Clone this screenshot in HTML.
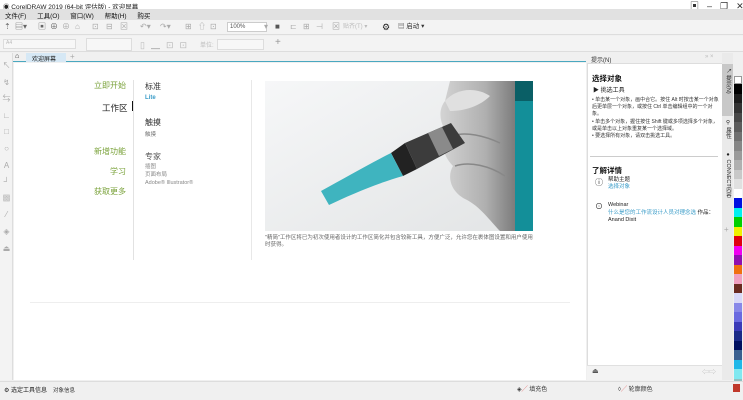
<!DOCTYPE html>
<html><head><meta charset="utf-8"><style>
*{margin:0;padding:0;box-sizing:border-box}
body{width:743px;height:400px;overflow:hidden;background:#f0f0f0;font-family:"Liberation Sans","Noto Sans CJK SC",sans-serif;font-size:7px;color:#333;position:relative}
.a{position:absolute}
.t{white-space:nowrap}
.i{position:absolute;top:22px;font-size:8px;color:#666;white-space:nowrap;line-height:10px}
</style></head><body>
<!-- title -->
<div class="a" style="left:0;top:0;width:743px;height:10px;background:#fff"></div>
<div class="a t" style="left:3px;top:1px;font-size:6.5px;color:#222">◉ CorelDRAW 2019 (64-bit 评估版) - 欢迎屏幕</div>
<div class="a t" style="left:690px;top:-1px;font-size:9px;color:#333;letter-spacing:8px">▣–❐✕</div>
<!-- menu -->
<div class="a" style="left:0;top:9px;width:743px;height:11px;background:#e1e1e1"></div>
<div class="a t" style="left:5px;top:10px;font-size:6.5px;color:#111;word-spacing:9px">文件(F) 工具(O) 窗口(W) 帮助(H) 购买</div>
<!-- toolbar1 -->
<div class="a" style="left:0;top:20px;width:743px;height:15px;background:#f3f3f3;border-bottom:1px solid #ddd"></div>
<div class="i" style="left:4px">⇡</div>
<div class="i" style="left:15px">▤▾</div>
<div class="i" style="left:38px">▣</div>
<div class="i" style="left:50px">⊕</div>
<div class="i" style="left:62px;color:#aaa">⊕</div>
<div class="i" style="left:75px;color:#aaa">⌂</div>
<div class="i" style="left:92px;color:#aaa">⊡</div>
<div class="i" style="left:106px;color:#aaa">⊟</div>
<div class="i" style="left:120px;color:#aaa">⊠</div>
<div class="i" style="left:140px;color:#aaa">↶▾</div>
<div class="i" style="left:160px;color:#aaa">↷▾</div>
<div class="i" style="left:185px;color:#aaa">⊞</div>
<div class="i" style="left:198px;color:#aaa">⇧</div>
<div class="i" style="left:210px;color:#aaa">⊡</div>
<div class="a" style="left:227px;top:22px;width:40px;height:10px;background:#fff;border:1px solid #ccc;font-size:6px;padding-left:2px;color:#555;line-height:8px">100%</div>
<div class="i" style="left:264px;color:#aaa">▾</div>
<div class="i" style="left:275px;color:#555">■</div>
<div class="i" style="left:290px;color:#aaa">⊏</div>
<div class="i" style="left:303px;color:#aaa">⊞</div>
<div class="i" style="left:316px;color:#aaa">⊣</div>
<div class="i" style="left:332px;color:#aaa">⊠</div>
<div class="i" style="left:343px;color:#bbb;font-size:6px">贴齐(T) ▾</div>
<div class="i" style="left:382px;color:#222;font-size:9px">⚙</div>
<div class="i" style="left:398px;color:#333;font-size:6.5px">▤ 启动 ▾</div>
<!-- toolbar2 -->
<div class="a" style="left:0;top:36px;width:743px;height:16px;background:#f3f3f3;border-bottom:1px solid #ddd"></div>
<div class="a" style="left:3px;top:39px;width:73px;height:10px;border:1px solid #ddd;background:#f7f7f7;font-size:5px;color:#bbb;padding-left:2px">A4</div>
<div class="a" style="left:86px;top:38px;width:46px;height:13px;border:1px solid #ddd;background:#f7f7f7"></div>
<div class="a t" style="left:140px;top:38px;font-size:9px;color:#bbb;letter-spacing:6px">▯▁⊡⊡</div>
<div class="a t" style="left:200px;top:40px;font-size:6px;color:#bbb">单位:</div>
<div class="a" style="left:217px;top:39px;width:47px;height:11px;border:1px solid #ddd;background:#f7f7f7"></div>
<div class="a t" style="left:275px;top:37px;font-size:10px;color:#999">+</div>
<!-- tab bar -->
<div class="a" style="left:12px;top:53px;width:574px;height:9px;background:#f0f0f0;border-bottom:1px solid #4aa8c0"></div>
<div class="a t" style="left:15px;top:53px;font-size:7px;color:#222">⌂</div>
<div class="a" style="left:26px;top:53px;width:40px;height:9px;background:#d6e8f5"></div>
<div class="a t" style="left:32px;top:54px;font-size:6px;color:#222">欢迎屏幕</div>
<div class="a t" style="left:70px;top:52px;font-size:8px;color:#aaa">+</div>
<!-- left toolbox -->
<div class="a" style="left:0;top:53px;width:13px;height:327px;background:#f3f3f3;border-right:1px solid #ddd"></div>
<div class="a" style="left:1px;top:58px;width:11px;font-size:8px;color:#aaa;line-height:16.6px;text-align:center">↖<br>↯<br>⇆<br>∟<br>□<br>○<br>A<br>┘<br>▩<br>⁄<br>◈<br>⏏</div>
<!-- main -->
<div class="a" style="left:14px;top:63px;width:572px;height:317px;background:#fff"></div>
<div class="a t" style="left:94px;top:80px;font-size:8px;color:#7aa23a">立即开始</div>
<div class="a t" style="left:102px;top:102px;font-size:8.5px;color:#222">工作区</div>
<div class="a" style="left:132px;top:101px;width:2px;height:10px;background:#111"></div>
<div class="a t" style="left:94px;top:146px;font-size:8px;color:#7aa23a">新增功能</div>
<div class="a t" style="left:110px;top:166px;font-size:8px;color:#7aa23a">学习</div>
<div class="a t" style="left:94px;top:186px;font-size:8px;color:#7aa23a">获取更多</div>
<div class="a" style="left:133px;top:80px;width:1px;height:180px;background:#e2e2e2"></div>
<div class="a t" style="left:145px;top:81px;font-size:8px;color:#333">标准</div>
<div class="a t" style="left:145px;top:95px;font-size:6px;color:#3a9cc8;font-weight:bold">Lite</div>
<div class="a t" style="left:145px;top:117px;font-size:8px;color:#333">触摸</div>
<div class="a t" style="left:145px;top:130px;font-size:5.5px;color:#777">触摸</div>
<div class="a t" style="left:145px;top:151px;font-size:8px;color:#555">专家</div>
<div class="a t" style="left:145px;top:163px;font-size:5.5px;color:#888;line-height:8px">插图<br>页面布局<br>Adobe® Illustrator®</div>
<div class="a" style="left:251px;top:80px;width:1px;height:180px;background:#e8e8e8"></div>
<!-- photo -->
<svg class="a" style="left:265px;top:81px" width="268" height="150" viewBox="0 0 268 150">
<defs><linearGradient id="bg" x1="0" y1="0" x2="1" y2="1"><stop offset="0" stop-color="#f6f7f8"/><stop offset="1" stop-color="#e2e4e5"/></linearGradient>
<linearGradient id="hd" x1="0" y1="0" x2="1" y2="0"><stop offset="0" stop-color="#d4d4d4"/><stop offset=".6" stop-color="#b0b0b0"/><stop offset="1" stop-color="#7c7c7c"/></linearGradient></defs>
<rect width="268" height="150" fill="url(#bg)"/>
<path d="M185 0 L250 0 L250 150 L235 150 C225 140 215 125 200 118 C185 110 182 95 188 85 C178 75 175 62 185 55 C175 45 172 30 180 20 Z" fill="url(#hd)"/>
<path d="M180 20 C190 8 210 5 225 15 C215 25 200 30 185 30 Z" fill="#e0e0e0"/>
<path d="M190 85 C205 80 225 85 240 95 M188 55 C200 50 220 55 235 62" stroke="#888" stroke-width="1.5" fill="none"/>
<path d="M140 62 L186 42 L200 62 L152 88 Z" fill="#3c3c3c"/>
<path d="M163 52 L177 46 L188 68 L174 75 Z" fill="#8a8a8a"/>
<path d="M140 62 L152 88 L138 95 L126 72 Z" fill="#222"/>
<path d="M126 72 L138 95 C110 103 85 114 64 124 L56 110 C78 98 102 84 126 72 Z" fill="#3fb4bf"/>
<rect x="250" y="0" width="18" height="150" fill="#138f99"/>
<rect x="250" y="0" width="18" height="20" fill="#0a5f66"/>
</svg>
<div class="a" style="left:265px;top:235px;width:268px;font-size:5.5px;color:#666;line-height:7px">"精简"工作区将已为初次使用者设计的工作区简化并包含较新工具，方便广泛，允许您在裹体图设置和用户使用时获得。</div>
<div class="a" style="left:30px;top:302px;width:540px;height:1px;background:#eee"></div>
<!-- docker -->
<div class="a" style="left:587px;top:53px;width:135px;height:327px;background:#fff;border-left:1px solid #ddd"></div>
<div class="a" style="left:587px;top:53px;width:135px;height:11px;background:#f0f0f0;border-bottom:1px solid #ddd"></div>
<div class="a t" style="left:591px;top:55px;font-size:6px;color:#333">提示(N)</div>
<div class="a t" style="left:705px;top:54px;font-size:6px;color:#bbb">» ×</div>
<div class="a t" style="left:592px;top:73px;font-size:7.5px;color:#111;font-weight:bold">选择对象</div>
<div class="a t" style="left:593px;top:85px;font-size:6px;color:#222">▶ 挑选工具</div>
<div class="a" style="left:592px;top:97px;width:127px;font-size:5px;color:#333;line-height:7.2px">• 单击某一个对象，画中合它。按住 Alt 时按击某一个对象后更单层一个对象，或按住 Ctrl 单击编辑组中的一个对象。<br>• 单击多个对象，握住按住 Shift 键或多项选择多个对象，或是单击以上对象重复某一个选择域。<br>• 要选择所有对象，请双击挑选工具。</div>
<div class="a" style="left:590px;top:156px;width:128px;height:1px;background:#ccc"></div>
<div class="a t" style="left:592px;top:165px;font-size:7.5px;color:#111;font-weight:bold">了解详情</div>
<div class="a t" style="left:595px;top:177px;font-size:8px;color:#222">ⓘ</div>
<div class="a t" style="left:608px;top:177px;font-size:5.5px;color:#222;line-height:7px">帮助主题<br><span style="color:#3a9cc8">选择对象</span></div>
<div class="a t" style="left:595px;top:201px;font-size:8px;color:#222">⊙</div>
<div class="a" style="left:608px;top:202px;width:110px;font-size:5.5px;color:#222;line-height:7.5px">Webinar<br><span style="color:#3a9cc8">什么是您的工作流设计人员对理念选</span> 作品：Anand Dixit</div>
<div class="a" style="left:587px;top:365px;width:135px;height:15px;background:#f3f3f3;border-top:1px solid #e0e0e0"></div>
<div class="a t" style="left:592px;top:367px;font-size:7px;color:#555">⏏</div>
<div class="a t" style="left:702px;top:367px;font-size:7px;color:#bbb">⇦⇨</div>
<!-- vertical tabs -->
<div class="a" style="left:722px;top:53px;width:11px;height:327px;background:#eaeaea"></div>
<div class="a" style="left:722px;top:64px;width:11px;height:52px;background:#c8c8c8"></div>
<div class="a" style="left:723px;top:68px;font-size:5.5px;color:#222;writing-mode:vertical-rl;line-height:9px">↖ 提示(N)</div>
<div class="a" style="left:723px;top:120px;font-size:5.5px;color:#222;writing-mode:vertical-rl;line-height:9px">⚲ 属性</div>
<div class="a" style="left:723px;top:152px;font-size:5.5px;color:#222;writing-mode:vertical-rl;line-height:9px">● CONNECT内容</div>
<div class="a t" style="left:724px;top:225px;font-size:8px;color:#aaa">+</div>
<!-- palette -->
<div class="a" style="left:733px;top:53px;width:10px;height:327px;background:#f0f0f0"></div>
<div class="a" style="left:734px;top:76px;width:8px">
<div style="height:8px;background:#fff;border:1px solid #999"></div>
<div style="height:9.5px;background:#000"></div><div style="height:9.5px;background:#1c1c1c"></div><div style="height:9.5px;background:#333"></div><div style="height:9.5px;background:#484848"></div><div style="height:9.5px;background:#5c5c5c"></div><div style="height:9.5px;background:#707070"></div><div style="height:9.5px;background:#868686"></div><div style="height:9.5px;background:#9a9a9a"></div><div style="height:9.5px;background:#b0b0b0"></div><div style="height:9.5px;background:#c8c8c8"></div><div style="height:9.5px;background:#e0e0e0"></div><div style="height:9.5px;background:#fff"></div>
<div style="height:9.5px;background:#0010e0"></div><div style="height:9.5px;background:#00f0f0"></div><div style="height:9.5px;background:#00d000"></div><div style="height:9.5px;background:#f0f000"></div><div style="height:9.5px;background:#e00010"></div><div style="height:9.5px;background:#f000f0"></div><div style="height:9.5px;background:#9010b0"></div><div style="height:9.5px;background:#f07010"></div><div style="height:9.5px;background:#f0a0c0"></div><div style="height:9.5px;background:#6a2a20"></div><div style="height:9.5px;background:#d8d8f8"></div><div style="height:9.5px;background:#8888e8"></div><div style="height:9.5px;background:#6a6ae0"></div><div style="height:9.5px;background:#3a3ab8"></div><div style="height:9.5px;background:#1a2a88"></div><div style="height:9.5px;background:#001060"></div><div style="height:9.5px;background:#3a6090"></div><div style="height:9.5px;background:#20b8e8"></div><div style="height:9.5px;background:#80e8f0"></div><div style="height:9.5px;background:#90c0c0"></div><div style="height:9.5px;background:#508080"></div>
</div>
<!-- status bar -->
<div class="a" style="left:0;top:381px;width:743px;height:19px;background:#f0f0f0;border-top:1px solid #ddd"></div>
<div class="a t" style="left:4px;top:385px;font-size:6px;color:#222">⚙ 选定工具信息</div>
<div class="a t" style="left:53px;top:386px;font-size:5.5px;color:#333">对象信息</div>
<div class="a t" style="left:517px;top:384px;font-size:6px;color:#333">◈<span style="color:#d33">╱</span> 填充色</div>
<div class="a t" style="left:618px;top:384px;font-size:6px;color:#333">◊<span style="color:#d33">╱</span> 轮廓颜色</div>
<div class="a" style="left:733px;top:384px;width:7px;height:8px;background:#c0392b"></div>
</body></html>
